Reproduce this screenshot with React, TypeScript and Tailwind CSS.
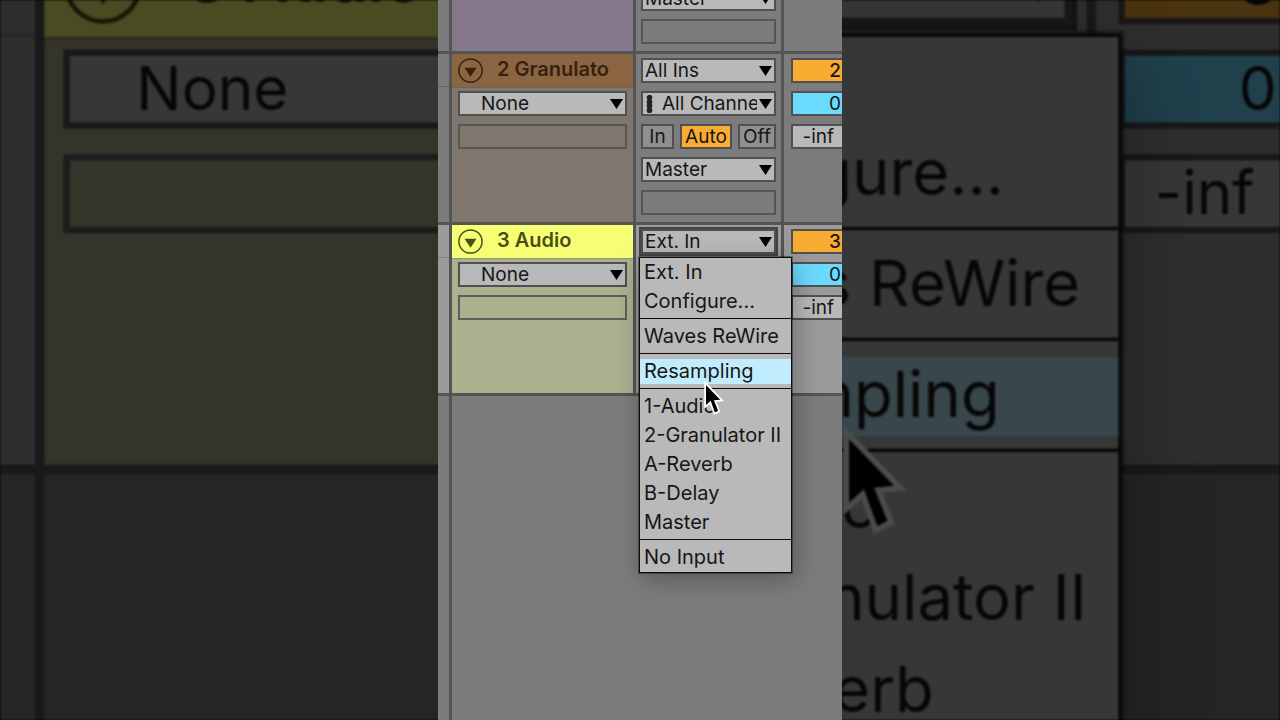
import React from "react";

function Chooser({
  label,
  value,
  className = "",
  pad = "pl-[2px]",
  children,
}: {
  label: string;
  value: string;
  className?: string;
  pad?: string;
  children?: React.ReactNode;
}) {
  return (
    <div className={`relative h-[25px] w-full shrink-0 ${className}`}>
      <select
        aria-label={label}
        defaultValue={value}
        className={`block h-full w-full appearance-none border-2 border-[#505050] bg-[#b9b9b9] pr-[17px] text-[19px] leading-5 text-[#161616] outline-none ${pad}`}
      >
        <option>{value}</option>
      </select>
      {children}
      <svg
        viewBox="0 0 13 10"
        className="pointer-events-none absolute top-2 right-1 h-[10px] w-[13px] fill-black"
        aria-hidden="true"
      >
        <path d="M0 0h13L6.5 10z" />
      </svg>
    </div>
  );
}

function EmptySlot() {
  return <div className="h-[25px] w-full shrink-0 border-2 border-[#505050]/85" />;
}

function MonitorButton({ text, className }: { text: string; className: string }) {
  return (
    <button
      type="button"
      className={`flex h-[25px] items-center justify-center border-2 border-[#505050] text-[19px] leading-5 text-[#161616] ${className}`}
    >
      {text}
    </button>
  );
}

function TrackHeader({
  name,
  header,
  ink,
  body,
}: {
  name: string;
  header: string;
  ink: string;
  body: string;
}) {
  return (
    <section className={`flex w-[181px] shrink-0 flex-col ${body}`}>
      <header className={`flex h-[33px] shrink-0 items-start gap-[14px] pt-1 pl-[6px] ${header} ${ink}`}>
        <button type="button" aria-label={`Fold ${name}`} className="size-[25px] shrink-0">
          <svg viewBox="0 0 25 25" className="size-full" aria-hidden="true">
            <circle cx="12.5" cy="12.5" r="11.6" fill="none" stroke="currentColor" strokeWidth="1.5" />
            <path d="M6.5 9.8h12l-6 9z" fill="currentColor" />
          </svg>
        </button>
        <h2 className="text-[20px] leading-[23px] font-semibold whitespace-nowrap">{name}</h2>
      </header>
      <div className="flex flex-col gap-2 border-t border-black/15 px-[6px] pt-[3px]">
        <Chooser label={`${name} clip source`} value="None" pad="pl-[21px]" />
        <EmptySlot />
      </div>
    </section>
  );
}

function MixerCell({ track, volume }: { track: string; volume: string }) {
  return (
    <section className="flex min-w-0 flex-1 flex-col gap-2 overflow-hidden pt-1 pl-[7px] text-[19px] leading-5 text-[#161616]">
      <button
        type="button"
        aria-label={`Track ${track} activator`}
        className="flex h-[25px] items-center justify-end border-2 border-r-0 border-[#505050] bg-[#f8ac32] pr-px font-medium"
      >
        {track}
      </button>
      <div className="flex h-[25px] items-center justify-end border-2 border-r-0 border-[#505050] bg-[#6bdaff] pr-px">
        {volume}
      </div>
      <div className="flex h-[25px] items-center justify-end border-2 border-r-0 border-[#505050] bg-[#b9b9b9] pr-2">
        -inf
      </div>
    </section>
  );
}

const gutter = "w-[11px] shrink-0";
const routing = "flex w-[145px] shrink-0 flex-col gap-2 px-[5px] pt-1";
const row = "flex shrink-0 gap-x-[3px] border-b-[3px] border-[#545454] bg-[#545454]";

const inputGroups = [
  ["Ext. In", "Configure..."],
  ["Waves ReWire"],
  ["Resampling"],
  ["1-Audio", "2-Granulator II", "A-Reverb", "B-Delay", "Master"],
  ["No Input"],
];

function InputMenu() {
  return (
    <div
      role="listbox"
      aria-label="Audio From"
      className="absolute top-7 -left-[2px] z-10 w-[153px] border border-[#0c0c0c] bg-[#b9b9b9] shadow-[0_0_0_1px_rgba(0,0,0,0.35),3px_6px_24px_rgba(0,0,0,0.3)]"
    >
      {inputGroups.map((group, i) => (
        <div key={group[0]} className={i > 0 ? "mt-[2px] border-t border-[#0c0c0c] pt-[3px]" : ""}>
          {group.map((item) => (
            <button
              key={item}
              type="button"
              role="option"
              aria-selected={item === "Resampling"}
              className="flex h-[29px] w-full items-center text-left text-[20px] whitespace-nowrap text-[#161616]"
            >
              <span
                className={`h-[25px] w-full pl-1 leading-[25px] ${item === "Resampling" ? "bg-[#c0ecfe]" : ""}`}
              >
                {item}
              </span>
            </button>
          ))}
        </div>
      ))}
    </div>
  );
}

function Pointer() {
  return (
    <svg
      viewBox="-5 -7 28 40"
      className="pointer-events-none absolute top-[378px] left-[263px] z-20 h-10 w-7"
      aria-hidden="true"
    >
      <path
        d="M0 0V20L4.7 15.8L8.9 27.4L12.1 25.8L7.9 15.3L14.2 14.7Z"
        fill="#000"
        stroke="#fff"
        strokeWidth="3.6"
        strokeLinejoin="miter"
        paintOrder="stroke"
      />
    </svg>
  );
}

function Arrangement() {
  return (
    <div className="relative flex aspect-[101/180] h-screen shrink-0 flex-col overflow-hidden bg-[#7c7c7c]">
      <div className={`${row} h-[54px]`}>
        <div className={`${gutter} bg-[#7c7c7c]`} />
        <section className="w-[181px] shrink-0 bg-[#85788a]" />
        <section className="flex w-[145px] shrink-0 flex-col justify-end gap-2 overflow-hidden bg-[#7c7c7c] px-[5px] pb-[7px]">
          <Chooser label="1 Audio To" value="Master" />
          <EmptySlot />
        </section>
        <section className="flex-1 bg-[#7c7c7c]" />
      </div>

      <div className={`${row} h-[171px]`}>
        <div className={`${gutter} bg-[#7c7c7c]`}>
          <div className="h-[33px] border-b border-[#666]" />
        </div>
        <TrackHeader name="2 Granulato" header="bg-[#8b6441]" ink="text-[#35220f]" body="bg-[#7f776d]" />
        <section className={`${routing} bg-[#7c7c7c]`}>
          <Chooser label="2 Audio From" value="All Ins" />
          <Chooser label="2 Input Channel" value="All Channels" pad="pl-[19px]">
            <svg
              viewBox="0 0 7 18"
              className="pointer-events-none absolute top-1 left-[5px] h-[18px] w-[7px] fill-[#222]"
              aria-hidden="true"
            >
              <circle cx="3.5" cy="2.6" r="2.8" />
              <circle cx="3.5" cy="6.9" r="2.8" />
              <circle cx="3.5" cy="11.1" r="2.8" />
              <circle cx="3.5" cy="15.4" r="2.8" />
            </svg>
          </Chooser>
          <div className="flex gap-[6px]" role="group" aria-label="Monitor">
            <MonitorButton text="In" className="w-[33px] bg-[#8f8f8f]" />
            <MonitorButton text="Auto" className="flex-1 bg-[#f8ac32]" />
            <MonitorButton text="Off" className="w-[38px] bg-[#8f8f8f]" />
          </div>
          <Chooser label="2 Audio To" value="Master" />
          <EmptySlot />
        </section>
        <div className="flex min-w-0 flex-1 bg-[#7c7c7c]">
          <MixerCell track="2" volume="0" />
        </div>
      </div>

      <div className={`${row} h-[171px]`}>
        <div className={`${gutter} bg-[#9b9b9b]`}>
          <div className="h-[33px] border-b border-[#808080]" />
        </div>
        <TrackHeader name="3 Audio" header="bg-[#f6ff74]" ink="text-[#4a4d16]" body="bg-[#adb08f]" />
        <section className={`${routing} bg-[#9b9b9b]`}>
          <div className="relative">
            <Chooser label="3 Audio From" value="Ext. In" className="ring-2 ring-[#444]" />
            <InputMenu />
          </div>
        </section>
        <div className="flex min-w-0 flex-1 bg-[#9b9b9b]">
          <MixerCell track="3" volume="0" />
        </div>
      </div>

      <div className="flex flex-1">
        <div className={gutter} />
        <div className="w-[3px] shrink-0 bg-[#545454]" />
      </div>

      <Pointer />
    </div>
  );
}

export default function App() {
  return (
    <div className="relative flex h-screen justify-center overflow-hidden bg-black font-['Inter','Liberation_Sans',sans-serif]">
      <div className="absolute inset-0 overflow-hidden blur-[1px]" aria-hidden="true" inert>
        <div className="flex h-full scale-[3.168] justify-center">
          <Arrangement />
        </div>
        <div className="absolute inset-0 bg-black/70" />
      </div>
      <main className="relative flex">
        <Arrangement />
      </main>
    </div>
  );
}
